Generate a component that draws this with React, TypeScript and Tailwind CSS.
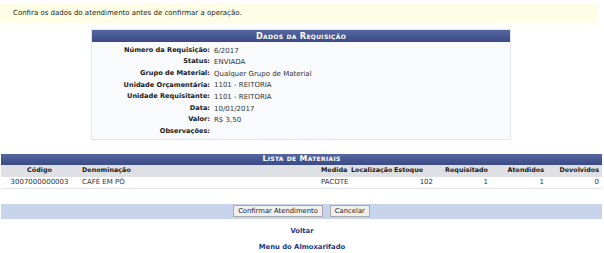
const font = { fontFamily: '"DejaVu Sans", Verdana, sans-serif' }

const DADOS = [
  ['Número da Requisição:', '6/2017'],
  ['Status:', 'ENVIADA'],
  ['Grupo de Material:', 'Qualquer Grupo de Material'],
  ['Unidade Orçamentária:', '1101 - REITORIA'],
  ['Unidade Requisitante:', '1101 - REITORIA'],
  ['Data:', '10/01/2017'],
  ['Valor:', 'R$ 3,50'],
  ['Observações:', ''],
]

const COLS = 'grid grid-cols-[77px_240px_31px_42px_44px_55px_56px_55px]'

export default function App() {
  return (
    <div className="w-[604px] h-[253px] bg-white text-[7px] text-[#333]" style={font}>
      {/* aviso */}
      <div className="pt-[3px] pr-[6px]">
        <div className="h-[20px] bg-[#fefee6] flex items-center pl-[13px] text-[#222]">
          Confira os dados do atendimento antes de confirmar a operação.
        </div>
      </div>

      {/* dados da requisição */}
      <div className="mt-[6px] ml-[91px] w-[420px] border border-[#e3e5ea] bg-[#f9fafc]">
        <div className="h-[12px] bg-gradient-to-b from-[#5566a0] to-[#3b4a84] text-white font-bold text-center flex items-center justify-center [font-variant:small-caps] tracking-[0.3px] text-[8.2px]">
          Dados da Requisição
        </div>
        <div className="pt-[3px] pb-[1px]">
          {DADOS.map(([label, value]) => (
            <div key={label} className="grid grid-cols-[118px_1fr] gap-x-[4px] h-[11.6px] items-center">
              <span className="text-right font-bold text-[#1a1a1a] text-[6.6px]">{label}</span>
              <span>{value}</span>
            </div>
          ))}
        </div>
      </div>

      {/* lista de materiais */}
      <div className="mt-[14px] mx-[1px] w-[601px]">
        <div className="h-[11px] bg-gradient-to-b from-[#5566a0] to-[#3b4a84] text-white font-bold flex items-center justify-center [font-variant:small-caps] tracking-[0.3px] text-[7.9px]">
          Lista de Materiais
        </div>
        <div className={`${COLS} h-[12px] items-center bg-[#dfe0e4] font-bold text-[#1a1a1a] text-[6.4px]`}>
          <span className="text-center">Código</span>
          <span className="pl-[4px]">Denominação</span>
          <span className="pl-[3px]">Medida</span>
          <span className="pl-[2px]">Localização</span>
          <span className="pl-[3px]">Estoque</span>
          <span className="text-right pr-[2px]">Requisitado</span>
          <span className="text-right pr-[2px]">Atendidos</span>
          <span className="text-right pr-[2px]">Devolvidos</span>
        </div>
        <div className={`${COLS} h-[12px] items-center bg-white border-b border-[#e4e4e8]`}>
          <span className="text-center">3007000000003</span>
          <span className="pl-[4px]">CAFÉ EM PÓ</span>
          <span className="pl-[3px]">PACOTE</span>
          <span />
          <span className="text-right pr-[2px]">102</span>
          <span className="text-right pr-[2px]">1</span>
          <span className="text-right pr-[2px]">1</span>
          <span className="text-right pr-[2px]">0</span>
        </div>
      </div>

      {/* ações */}
      <div className="mt-[15px] mx-[1px] w-[601px] h-[15px] bg-[#c8d4ec] flex items-center justify-center gap-[7px]">
        <button className="h-[12px] px-[4px] bg-[#efefef] border border-[#a9a9a9] text-[#222] text-[6.8px] leading-none" style={font}>
          Confirmar Atendimento
        </button>
        <button className="h-[12px] px-[4px] bg-[#efefef] border border-[#a9a9a9] text-[#222] text-[6.8px] leading-none" style={font}>
          Cancelar
        </button>
      </div>

      <div className="mt-[8px] flex flex-col items-center gap-[8px] font-bold text-[#1c3a82] text-[6.8px]">
        <a className="leading-[8px]">Voltar</a>
        <a className="leading-[8px]">Menu do Almoxarifado</a>
      </div>
    </div>
  )
}
